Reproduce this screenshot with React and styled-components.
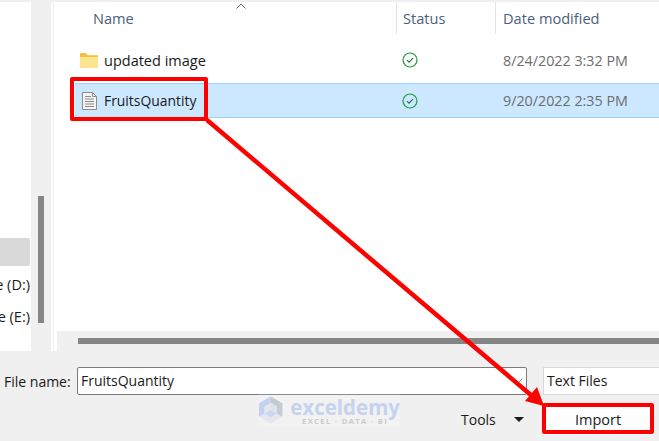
import React from 'react'
import styled, { createGlobalStyle } from 'styled-components'

const GlobalStyle = createGlobalStyle`
    html, body { margin: 0; padding: 0; background: #f0f0f0; }
    body { font-family: "Open Sans", "Noto Sans", sans-serif; overflow: hidden; }
`

const Page = styled.div`
    position: relative;
    width: 659px;
    height: 441px;
    padding-top: 2px;
    box-sizing: border-box;
    display: flex;
    flex-direction: column;
    overflow: hidden;
    background: #f0f0f0;
`

const Browser = styled.div`
    display: flex;
    height: 349px;
`

const NavPane = styled.div`
    width: 31px;
    background: #fff;
    padding-top: 236px;
    box-sizing: border-box;
    overflow: hidden;
    flex: none;
`

const NavSelected = styled.div`
    height: 28px;
    width: 30px;
    background: #d9d9d9;
    border-radius: 0 2px 2px 0;
    margin-bottom: 3px;
`

const NavRow = styled.div`
    height: 32px;
    line-height: 32px;
    font-size: 14.5px;
    color: #1a1a1a;
    white-space: nowrap;
    width: 30px;
    overflow: hidden;
    display: flex;
    justify-content: flex-end;
`

const NavScroll = styled.div`
    width: 20px;
    flex: none;
    padding: 194px 7px 0;
    box-sizing: border-box;
`

const NavThumb = styled.div`
    width: 6px;
    height: 127px;
    background: #858585;
`

const Splitter = styled.div`
    width: 2px;
    flex: none;
    background: #fff;
    border-right: 1px solid #f0f0f0;
`

const Main = styled.div`
    flex: 1;
    min-width: 0;
    display: flex;
    flex-direction: column;
    background: #fff;
`

const List = styled.div`
    flex: 1;
    padding-left: 21px;
`

const HeaderRow = styled.div`
    display: grid;
    grid-template-columns: 321px 99px 1fr;
    height: 32px;
    position: relative;
    margin-bottom: 6px;
`

const HeaderCell = styled.div`
    font-size: 14.6px;
    color: #4c607a;
    line-height: 32px;
    padding-left: ${p => p.$pad}px;
    border-left: ${p => (p.$sep ? '1px solid #e5e5e5' : 'none')};
`

const SortCaret = styled.svg`
    position: absolute;
    left: 161px;
    top: 1px;
`

const FileRow = styled.div`
    display: grid;
    grid-template-columns: 321px 99px 1fr;
    align-items: center;
    height: ${p => (p.$selected ? 35 : 40)}px;
    margin-bottom: ${p => (p.$selected ? 0 : 3)}px;
    background: ${p => (p.$selected ? '#cce8ff' : 'transparent')};
    border-top: 1px solid ${p => (p.$selected ? '#99d1ff' : 'transparent')};
    border-bottom: 1px solid ${p => (p.$selected ? '#99d1ff' : 'transparent')};
    box-sizing: border-box;
`

const NameCell = styled.div`
    display: flex;
    align-items: center;
    gap: ${p => p.$gap}px;
    padding-left: ${p => p.$pad}px;
    font-size: ${p => p.$size}px;
    color: #1a1a1a;
`

const StatusCell = styled.div`
    display: flex;
    align-items: center;
    padding-left: 6px;
    height: 100%;
`

const DateCell = styled.div`
    font-size: 14.3px;
    color: #6d6d6d;
    padding-left: 8px;
`

const HScroll = styled.div`
    height: 20px;
    flex: none;
    background: #f0f0f0;
    margin-left: 3px;
    padding: 7px 0 0 21px;
    box-sizing: border-box;
`

const HThumb = styled.div`
    height: 6px;
    background: #858585;
`

const Footer = styled.div`
    flex: 1;
    display: flex;
    flex-direction: column;
    padding-top: 16px;
`

const NameLine = styled.div`
    display: flex;
    align-items: center;
    height: 28px;
    padding-left: 4px;
`

const Label = styled.div`
    width: 73px;
    flex: none;
    font-size: 14px;
    color: #1a1a1a;
`

const NameInput = styled.div`
    width: 450px;
    height: 28px;
    flex: none;
    box-sizing: border-box;
    background: #fff;
    border: 1px solid #7a7a7a;
    border-radius: 2px;
    padding: 0 3px;
    font-size: 14px;
    line-height: 26px;
    color: #1a1a1a;
    display: flex;
    align-items: center;
    justify-content: space-between;
`

const TypeSelect = styled.div`
    margin-left: 16px;
    flex: 1;
    height: 28px;
    box-sizing: border-box;
    background: #fff;
    border: 1px solid #d9d9d9;
    border-right: none;
    padding-left: 3px;
    font-size: 14px;
    line-height: 26px;
    color: #1a1a1a;
`

const ActionLine = styled.div`
    display: flex;
    align-items: center;
    height: 31px;
    margin-top: 9px;
    padding-left: 461px;
`

const ToolsLabel = styled.div`
    width: 53px;
    font-size: 14px;
    color: #1a1a1a;
`

const Caret = styled.div`
    width: 0;
    height: 0;
    border-left: 5px solid transparent;
    border-right: 5px solid transparent;
    border-top: 5px solid #1a1a1a;
`

const ImportButton = styled.div`
    margin-left: 18px;
    width: 112px;
    height: 31px;
    box-sizing: border-box;
    background: #fff;
    text-align: center;
    font-size: 14.5px;
    line-height: 31px;
    color: #1a1a1a;
`

const RedBox = styled.div`
    position: absolute;
    left: ${p => p.$x}px;
    top: ${p => p.$y}px;
    width: ${p => p.$w}px;
    height: ${p => p.$h}px;
    box-sizing: border-box;
    border: ${p => p.$b}px solid #fe0000;
    border-radius: 2px;
`

const ArrowLayer = styled.svg`
    position: absolute;
    left: 0;
    top: 0;
    pointer-events: none;
`

const Watermark = styled.div`
    position: absolute;
    left: 258px;
    top: 394px;
    width: 142px;
    height: 32px;
    display: flex;
    align-items: center;
    gap: 7px;
    background: rgba(255, 255, 255, 0.14);
`

const BrandText = styled.div`
    display: flex;
    flex-direction: column;
    padding-top: 3px;
`

const BrandName = styled.div`
    font-family: "Open Sans", sans-serif;
    font-size: 20.5px;
    font-weight: 700;
    line-height: 20px;
    color: #c5d3ee;
`

const BrandTag = styled.div`
    font-family: "Open Sans", sans-serif;
    font-size: 7.5px;
    font-weight: 700;
    line-height: 9px;
    letter-spacing: 1.4px;
    color: #c8cace;
    text-align: center;
`

const CheckIcon = () => (
    <svg width="16" height="16" viewBox="0 0 16 16" fill="none">
        <circle cx="8" cy="8" r="7" stroke="#1f9a3d" strokeWidth="1.2" />
        <path d="M5 8.2l2 2 4-4" stroke="#1f7a3d" strokeWidth="1.2" />
    </svg>
)

const FolderIcon = () => (
    <svg width="18" height="15" viewBox="0 0 18 15">
        <path d="M0 1.5C0 .7.5 0 1.2 0h4.6l2 2.2H18V14a1 1 0 0 1-1 1H1a1 1 0 0 1-1-1z" fill="#f3c13f" />
        <path d="M0 4h18v10a1 1 0 0 1-1 1H1a1 1 0 0 1-1-1z" fill="#fde48f" />
    </svg>
)

const TextFileIcon = () => (
    <svg width="15" height="18" viewBox="0 0 15 18" fill="none">
        <path d="M.5.5h10l4 4v13H.5z" fill="#f4f4f4" stroke="#8c8c8c" />
        <path d="M10.5.5v4h4" stroke="#8c8c8c" />
        <path d="M3 4.5h6M3 7h9M3 9.5h9M3 12h9M3 14.5h9" stroke="#8a8a8a" />
    </svg>
)

const App = () => {
    const files = [
        { name: 'updated image', date: '8/24/2022 3:32 PM', icon: <FolderIcon />, pad: 5, gap: 6, size: 14.5 },
        { name: 'FruitsQuantity', date: '9/20/2022 2:35 PM', icon: <TextFileIcon />, pad: 7, gap: 7, size: 13.9, selected: true },
    ]

    return (
        <Page>
            <GlobalStyle />
            <Browser>
                <NavPane>
                    <NavSelected />
                    <NavRow>e (D:)</NavRow>
                    <NavRow>e (E:)</NavRow>
                </NavPane>
                <NavScroll><NavThumb /></NavScroll>
                <Splitter />
                <Main>
                    <List>
                        <HeaderRow>
                            <HeaderCell $pad={18}>Name</HeaderCell>
                            <SortCaret width="10" height="6" viewBox="0 0 10 6" fill="none">
                                <path d="M.5 5.5L5 1l4.500 4.500" stroke="#6d6d6d" />
                            </SortCaret>
                            <HeaderCell $sep $pad={6}>Status</HeaderCell>
                            <HeaderCell $sep $pad={7}>Date modified</HeaderCell>
                        </HeaderRow>
                        {files.map(f => (
                            <FileRow key={f.name} $selected={f.selected}>
                                <NameCell $pad={f.pad} $gap={f.gap} $size={f.size}>{f.icon}{f.name}</NameCell>
                                <StatusCell><CheckIcon /></StatusCell>
                                <DateCell>{f.date}</DateCell>
                            </FileRow>
                        ))}
                    </List>
                    <HScroll><HThumb /></HScroll>
                </Main>
            </Browser>
            <Footer>
                <NameLine>
                    <Label>File name:</Label>
                    <NameInput>
                        FruitsQuantity
                        <svg width="10" height="6" viewBox="0 0 10 6" fill="none">
                            <path d="M.5.5L5 5 9.500.5" stroke="#8a8a8a" />
                        </svg>
                    </NameInput>
                    <TypeSelect>Text Files</TypeSelect>
                </NameLine>
                <ActionLine>
                    <ToolsLabel>Tools</ToolsLabel>
                    <Caret />
                    <ImportButton>Import</ImportButton>
                </ActionLine>
            </Footer>
            <Watermark>
                <svg width="28" height="32" viewBox="0 0 28 32">
                    <path d="M14 1l13 7.500v15L14 31 1 23.500v-15z" fill="#e4e8ee" />
                    <path d="M14 1L1 8.500v15l6-3.500v-8l7-4z" fill="#c3d2f0" />
                    <path d="M14 1l13 7.500v15L21 20v-8l-7-4z" fill="#c4cbd2" />
                    <path d="M14 16l7 4-7 4-7-4z" fill="#c9d7f2" />
                    <path d="M14 8l7 4v8l-7-4z" fill="#dfe3e8" />
                </svg>
                <BrandText>
                    <BrandName>exceldemy</BrandName>
                    <BrandTag>EXCEL · DATA · BI</BrandTag>
                </BrandText>
            </Watermark>
            <RedBox $x={70} $y={77} $w={138} $h={44} $b={4} />
            <RedBox $x={542} $y={403} $w={112} $h={31} $b={4} />
            <ArrowLayer width="659" height="441" viewBox="0 0 659 441">
                <path d="M207 120L532 396" stroke="#fe0000" strokeWidth="4.5" fill="none" />
                <path d="M544 406L525 401L537 387z" fill="#fe0000" />
            </ArrowLayer>
        </Page>
    )
}

export default App
